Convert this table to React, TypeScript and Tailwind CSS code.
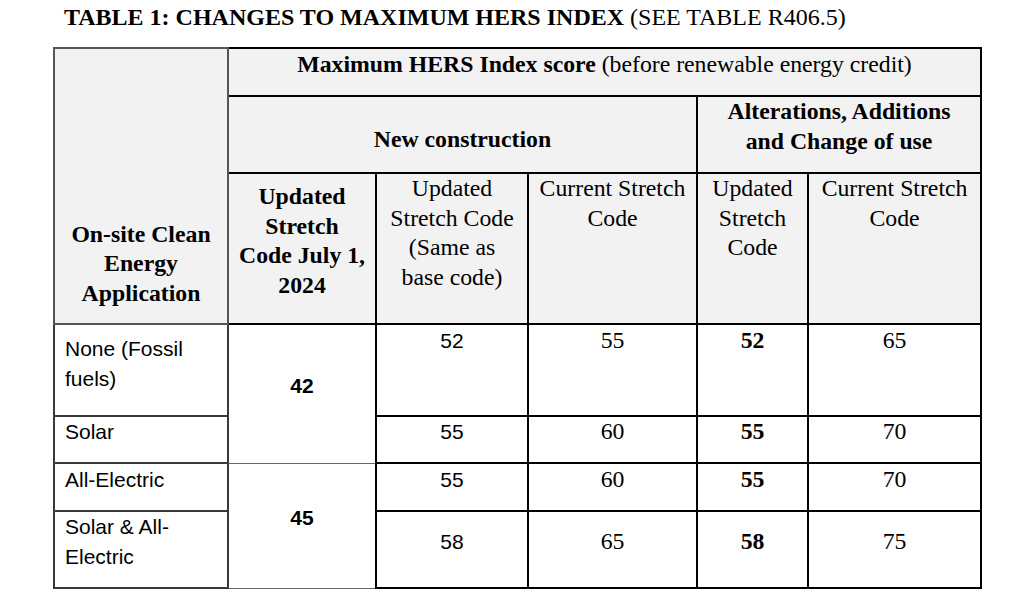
const serif = "font-['Liberation_Serif','Times_New_Roman',serif]";
const sans = "font-['Liberation_Sans',Arial,sans-serif]";

const head = "bg-[#f2f2f2] border-2 border-black text-center p-0";
const cell = "border-2 border-black text-center align-top p-0";
const side = `border-2 border-[#3a3a3a] align-top text-left pl-[10px] pr-[6px] text-[21px] ${sans}`;

const rows = [
  { label: "None (Fossil fuels)", base: "52", current: "55", alt: "52", altCurrent: "65", h: "h-[92px]", pt: "pt-[9px]", vt: "pt-px" },
  { label: "Solar", base: "55", current: "60", alt: "55", altCurrent: "70", h: "h-[47px]", pt: "pt-0", vt: "pt-0" },
  { label: "All-Electric", base: "55", current: "60", alt: "55", altCurrent: "70", h: "h-[48px]", pt: "pt-px", vt: "pt-px" },
  { label: "Solar & All-Electric", base: "58", current: "65", alt: "58", altCurrent: "75", h: "h-[77px]", pt: "pt-0", vt: "pt-[15px]" },
];

export default function App() {
  return (
    <div className={`w-[1024px] h-[608px] bg-white text-black ${serif}`}>
      <h1 className="pl-[64px] pt-[5px] text-[24px] leading-[24px]">
        <span className="font-bold">TABLE 1: CHANGES TO MAXIMUM HERS INDEX</span> (SEE TABLE R406.5)
      </h1>
      <table className="ml-[53px] mt-[18px] w-[927px] table-fixed border-collapse text-[23.75px] leading-[29.5px]">
        <colgroup>
          <col className="w-[174px]" />
          <col className="w-[148px]" />
          <col className="w-[152px]" />
          <col className="w-[169px]" />
          <col className="w-[111px]" />
          <col className="w-[173px]" />
        </colgroup>
        <thead>
          <tr className="h-[48px]">
            <td rowSpan={3} className="bg-[#f2f2f2] border-2 border-[#555] align-bottom text-center font-bold px-[12px] pb-[15px]">
              On-site Clean Energy Application
            </td>
            <td colSpan={5} className={`${head} align-top pt-[1px]`}>
              <span className="font-bold">Maximum HERS Index score</span> (before renewable energy credit)
            </td>
          </tr>
          <tr className="h-[77px]">
            <td colSpan={3} className={`${head} align-top pt-[28px] font-bold`}>
              New construction
            </td>
            <td colSpan={2} className={`${head} align-top font-bold px-[10px]`}>
              Alterations, Additions and Change of use
            </td>
          </tr>
          <tr className="h-[151px]">
            <td className={`${head} align-top pt-[8px] px-[8px] font-bold`}>Updated Stretch Code July 1, 2024</td>
            <td className={`${head} align-top px-[10px]`}>Updated Stretch Code (Same as base code)</td>
            <td className={`${head} align-top px-[4px]`}>Current Stretch Code</td>
            <td className={`${head} align-top px-[4px]`}>Updated Stretch Code</td>
            <td className={`${head} align-top px-[4px]`}>Current Stretch Code</td>
          </tr>
        </thead>
        <tbody>
          {rows.map((r, i) => (
            <tr key={r.label} className={r.h}>
              <td className={`${side} ${r.pt}`}>{r.label}</td>
              {i % 2 === 0 && (
                <td rowSpan={2} className={`border border-[#666] text-center align-top font-bold text-[21px] ${sans} ${i === 0 ? "pt-[46px]" : "pt-[39px]"}`}>
                  {i === 0 ? "42" : "45"}
                </td>
              )}
              <td className={`${cell} text-[21px] ${sans} ${r.vt}`}>{r.base}</td>
              <td className={`${cell} ${r.vt}`}>{r.current}</td>
              <td className={`${cell} ${r.vt} font-bold`}>{r.alt}</td>
              <td className={`${cell} ${r.vt}`}>{r.altCurrent}</td>
            </tr>
          ))}
        </tbody>
      </table>
    </div>
  );
}
